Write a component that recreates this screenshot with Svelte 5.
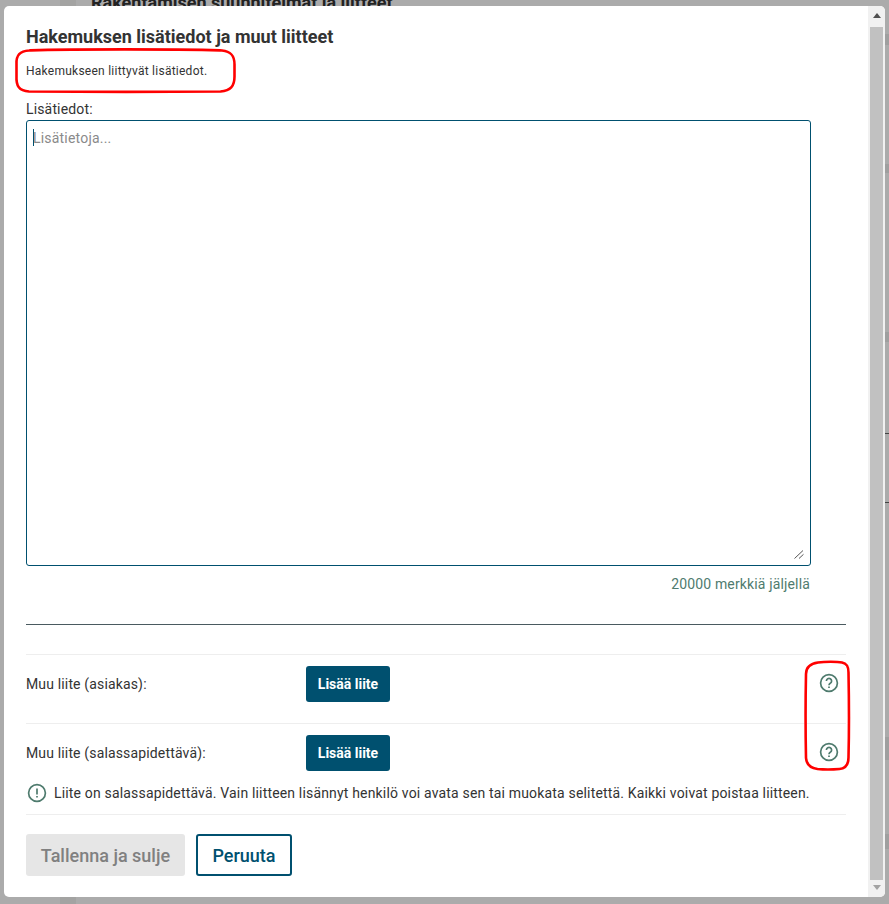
<script>
  const rows = [
    { label: "Muu liite (asiakas):", last: false },
    { label: "Muu liite (salassapidettävä):", last: true },
  ];
</script>

<div class="page">
  <div class="side"></div>
  <div class="behind">
    <h2>Rakentamisen suunnitelmat ja liitteet</h2>
  </div>
  <div class="edge"></div>
</div>

<div class="overlay">
  <div class="modal">
    <div class="content">
      <h1>Hakemuksen lisätiedot ja muut liitteet</h1>
      <p class="intro">Hakemukseen liittyvät lisätiedot.</p>

      <label for="info">Lisätiedot:</label>
      <div class="area">
        <textarea id="info" placeholder="Lisätietoja..."></textarea>
        <span class="caret"></span>
        <svg class="grip" width="10" height="9" viewBox="0 0 10 9" fill="none">
          <path d="M0.500 8.500L9 0.500" />
          <path d="M5 8.500L9.500 4.300" />
        </svg>
      </div>
      <div class="count">20000 merkkiä jäljellä</div>

      <hr />

      {#each rows as row}
        <div class="row" class:last={row.last}>
          <span class="row-label">{row.label}</span>
          <button class="add">Lisää liite</button>
          <svg class="help" width="20" height="20" viewBox="0 0 20 20" fill="none">
            <circle cx="10" cy="10" r="8.400" />
            <path d="M7.400 7.900a2.600 2.600 0 1 1 3.900 2.300c-.8.500-1.300 1-1.300 2" />
            <path d="M10 13.600v1.500" />
          </svg>
        </div>
      {/each}

      <div class="note">
        <svg width="20" height="20" viewBox="0 0 20 20" fill="none">
          <circle cx="10" cy="10" r="8.400" />
          <path d="M10 5.400v6" />
          <path d="M10 13v1.600" />
        </svg>
        <span>Liite on salassapidettävä. Vain liitteen lisännyt henkilö voi avata sen tai muokata selitettä. Kaikki voivat poistaa liitteen.</span>
      </div>

      <div class="actions">
        <button class="save" disabled>Tallenna ja sulje</button>
        <button class="cancel">Peruuta</button>
      </div>
    </div>

    <div class="scrollbar">
      <span class="arrow up"></span>
      <div class="thumb"></div>
      <span class="arrow down"></span>
    </div>

    <!-- hand drawn highlights from the screenshot -->
    <svg class="marks" width="881" height="891" viewBox="0 0 881 891" fill="none">
      <path d="M25 44.500C40 43 200 43 218 44.500c9 .8 12.500 5 12.500 14v12c0 10-4 14-14 15C190 86 40 86 25 85.500 15 85 12 80 12.500 70V58C12 49 16 45 25 44.500Z" />
      <path d="M814 656.500c7-1 19-1 24 0 5 1 6.500 4 6.500 10 .5 25 .5 65 0 85 0 7-3 11-9 11.500-6 .5-17 .5-22 0-7-1-11-4-11.500-11-.5-25-.5-60 0-84 0-7 5-10.500 12-11.500Z" />
    </svg>
  </div>
</div>

<style>
  :global(html), :global(body) {
    margin: 0;
    height: 904px;
    overflow: hidden;
  }

  .page {
    height: 904px;
    display: flex;
    background: #fff;
    font-family: Roboto, sans-serif;
  }
  .side {
    width: 60px;
  }
  .behind {
    flex: 1;
    border-left: 16px solid #f4f3f2;
    padding-left: 15px;
    overflow: hidden;
  }
  .behind h2 {
    margin: -8px 0 0;
    font-size: 18px;
    line-height: 21px;
    font-weight: 700;
    color: #333;
  }
  .edge {
    width: 4px;
    background: linear-gradient(
      to bottom,
      #fff 34px,
      #eee 34px 45px,
      #fff 45px 164px,
      #eee 164px 173px,
      #fff 173px 332px,
      #eee 332px 342px,
      #fff 342px 433px,
      #666 433px 434px,
      #fff 434px 502px,
      #666 502px 503px,
      #fff 503px 737px,
      #eee 737px 760px,
      #fff 760px 834px,
      #eee 834px 849px,
      #fff 849px
    );
  }

  .overlay {
    position: absolute;
    inset: 0;
    background: rgba(0, 0, 0, 0.33);
    padding: 6px 4px 7px 4px;
    box-sizing: border-box;
    height: 904px;
    font-family: Roboto, sans-serif;
    color: #333;
  }
  .modal {
    position: relative;
    height: 100%;
    width: 881px;
    display: flex;
    background: #fff;
    border-radius: 5px;
    overflow: hidden;
  }
  .content {
    flex: 1;
    min-width: 0;
    padding: 20px 22px 0;
  }

  h1 {
    margin: 0;
    font-size: 18px;
    line-height: 21px;
    font-weight: 700;
    color: #333;
  }
  .intro {
    margin: 16px 0 0;
    font-size: 12px;
    line-height: 16px;
    letter-spacing: 0.25px;
  }
  label {
    display: block;
    margin-top: 20px;
    font-size: 14px;
    line-height: 20px;
    letter-spacing: 0.15px;
  }
  .area {
    position: relative;
    width: 785px;
    height: 446px;
    margin-top: 1px;
  }
  textarea {
    display: block;
    width: 100%;
    height: 100%;
    box-sizing: border-box;
    margin: 0;
    padding: 8px 6px;
    border: 1px solid #00506f;
    border-radius: 3px;
    outline: none;
    resize: none;
    font-family: Roboto, sans-serif;
    font-size: 14px;
    line-height: 18px;
    letter-spacing: 0.2px;
    color: #333;
  }
  textarea::placeholder {
    color: #8a8a8a;
    opacity: 1;
  }
  .caret {
    position: absolute;
    left: 7px;
    top: 9px;
    width: 1px;
    height: 17px;
    background: #00506f;
  }
  .grip {
    position: absolute;
    right: 7px;
    bottom: 7px;
  }
  .grip path {
    stroke: #555;
    stroke-width: 1;
  }
  .count {
    width: 784px;
    margin-top: 9px;
    text-align: right;
    font-size: 14px;
    line-height: 18px;
    letter-spacing: 0.15px;
    color: #4f7b6e;
  }

  hr {
    margin: 31px 0 29px;
    border: 0;
    border-top: 1px solid #4a5a60;
  }

  .row {
    display: flex;
    align-items: center;
    padding: 11px 0 21px;
    border-top: 1px solid #eee;
    font-size: 14px;
    letter-spacing: 0.15px;
  }
  .row.last {
    padding-bottom: 0;
  }
  .row-label {
    width: 280px;
  }
  .add {
    width: 84px;
    height: 36px;
    padding: 0;
    border: 0;
    border-radius: 3px;
    background: #00506f;
    color: #fff;
    font-family: Roboto, sans-serif;
    font-size: 14px;
    font-weight: 700;
  }
  .help {
    margin: 0 7.500px 2px auto;
  }
  .help circle,
  .help path,
  .note circle,
  .note path {
    stroke: #4f7b6e;
    stroke-width: 1.7;
  }

  .note {
    display: flex;
    align-items: center;
    gap: 7px;
    height: 43px;
    padding: 0 1px;
    font-size: 14px;
    letter-spacing: 0.17px;
    border-bottom: 1px solid #eee;
  }

  .actions {
    display: flex;
    gap: 11px;
    margin-top: 19px;
  }
  .actions button {
    height: 42px;
    border-radius: 3px;
    font-family: Roboto, sans-serif;
    font-size: 18px;
    font-weight: 500;
    padding: 0;
  }
  .save {
    width: 159px;
    border: 0;
    background: #e6e6e6;
    color: #808080;
  }
  .cancel {
    width: 96px;
    border: 2px solid #00506f;
    background: #fff;
    color: #00506f;
  }

  .scrollbar {
    width: 17px;
    flex: none;
    display: flex;
    flex-direction: column;
    align-items: center;
    background: #f1f1f1;
  }
  .thumb {
    width: 13px;
    height: 853px;
    background: #c1c1c1;
  }
  .arrow {
    width: 0;
    height: 0;
    border-left: 4px solid transparent;
    border-right: 4px solid transparent;
  }
  .up {
    margin: 7px 0 9px;
    border-bottom: 5px solid #505050;
  }
  .down {
    margin: 5px 0 0;
    border-top: 5px solid #a3a3a3;
  }

  .marks {
    position: absolute;
    left: 0;
    top: 0;
    pointer-events: none;
  }
  .marks path {
    stroke: #f00;
    stroke-width: 2.600;
  }
</style>
